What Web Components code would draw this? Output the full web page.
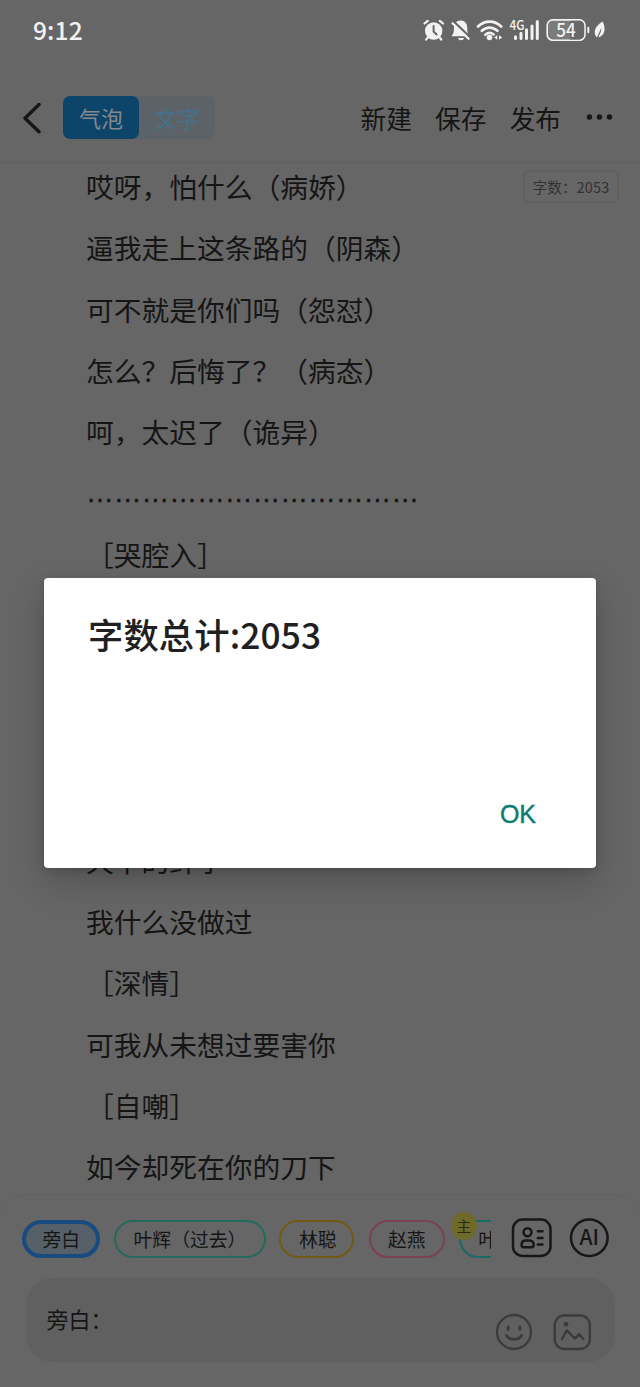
<!DOCTYPE html>
<html lang="zh-CN">
<head>
<meta charset="utf-8">
<title>字数总计</title>
<style>
html,body{margin:0;background:#666}
body{font-family:"Noto Sans CJK SC","Noto Sans",sans-serif;color:#151515;text-spacing-trim:space-all}
</style>
</head>
<body>
<script-app></script-app>
<script>
const define=(name,html)=>customElements.define(name,class extends HTMLElement{
  constructor(){super();this.attachShadow({mode:'open'}).innerHTML=html;}
});

define('status-bar',`<style>
:host{display:flex;box-sizing:border-box;height:75px;padding:0 0 0 33px;align-items:flex-start;color:#f2f2f2}
.time{font-size:24.5px;line-height:30px;margin-top:15px;font-weight:500;letter-spacing:.15px;flex:1}
svg{width:190px;height:30px;margin:15px 27px 0 0;flex:none}
text{font-family:"Noto Sans CJK SC",sans-serif;font-weight:500;fill:#f2f2f2}
</style>
<div class="time">9:12</div>
<svg viewBox="423 15 190 30" fill="#f2f2f2" stroke-linecap="round">
 <circle cx="433.7" cy="31" r="8.7"/>
 <path d="M424.500 23.500l3.200-2.600M443 23.500l-3.200-2.600M427.700 37.500l-1.500 2M439.700 37.500l1.500 2" stroke="#f2f2f2" stroke-width="2.200" fill="none"/>
 <path d="M433.600 26v5.500l3 3" stroke="#666" stroke-width="2" fill="none"/>
 <path d="M460.700 20.500c-4.500 0-6.700 3.300-6.700 7.500 0 4-.7 5.700-2.500 8.200h17.800c-1.800-2.500-2-4.500-2-8.200 0-4.200-2.100-7.500-6.600-7.500zM458 38h6c-.6 3-5.400 3-6 0z"/>
 <path d="M453.500 21.300L470.300 37.500" stroke="#666" stroke-width="2.400"/>
 <path d="M452.500 23.300L468.600 38.700" stroke="#f2f2f2" stroke-width="2.200"/>
 <g fill="none" stroke="#f2f2f2" stroke-width="2.700"><path d="M478 26.500c6.800-6.600 16.400-6.600 23.200 0M481.800 30.800c4.700-4.300 10.900-4.300 15.600 0M485.300 34.700c2.700-2.200 5.800-2.200 8.300-.2"/></g>
 <circle cx="489.500" cy="37.500" r="2.800"/>
 <path d="M494.200 37.500l3.100-2.300v4.600zM502.200 37.500l-3.100-2.300v4.600z"/>
 <text x="509.500" y="30" font-size="12.500" textLength="15" lengthAdjust="spacingAndGlyphs">4G</text>
 <path d="M515.500 36.700v1.800M521 33.300v5.200M526.500 29.800v8.700M532 26v12.500M537.300 21.500v17" stroke="#f2f2f2" stroke-width="3"/>
 <rect x="547.200" y="19.900" width="37.800" height="20.300" rx="5.500" fill="#7b7b7b" stroke="#f2f2f2" stroke-width="1.600"/>
 <path d="M570 20.800h9.500a4.600 4.600 0 0 1 4.600 4.600v9.400a4.600 4.600 0 0 1-4.600 4.600H570z" fill="#686868"/>
 <path d="M588.300 27.800v4.500" stroke="#f2f2f2" stroke-width="2"/>
 <text x="566" y="36.700" font-size="18" text-anchor="middle" textLength="19.500" lengthAdjust="spacingAndGlyphs">54</text>
 <path d="M602.700 21.600c3.200 6.700 2.500 13.600-3.900 15.900l.1-1.800c1.800-2.700 2.500-5 2.300-7.700-1.400 3.500-2.700 5.700-4.200 9.500-4.700-4.500-2-11.300 5.700-15.900z"/>
</svg>`);

define('mode-toggle',`<style>
:host{display:flex;width:152px;height:43px;border-radius:8px;background:#5c6368;font-size:22px;line-height:43px;text-align:center}
span{width:76px;color:#42728e}
.on{background:#0d456a;border-radius:7px;color:#83898d}
</style><span class="on">气泡</span><span>文字</span>`);

define('top-bar',`<style>
:host{display:flex;box-sizing:border-box;height:88px;border-bottom:1px solid #606060;padding:21px 27px 0 22px;align-items:flex-start}
.back{width:20px;height:32px;margin:6px 21px 0 0}
nav{margin-left:auto;display:flex;gap:23.200px;font-size:25.700px;line-height:43px}
.more{width:27px;height:8px;margin:17px 0 0 25px}
</style>
<svg class="back" viewBox="0 0 20 32" fill="none" stroke="#171717" stroke-width="3.400" stroke-linecap="round" stroke-linejoin="round"><path d="M17 2.500L3 16.200 17 29.700"/></svg>
<mode-toggle></mode-toggle>
<nav><span>新建</span><span>保存</span><span>发布</span></nav>
<svg class="more" viewBox="0 0 27 8" fill="#171717"><circle cx="3.500" cy="4" r="2.700"/><circle cx="13.500" cy="4" r="2.700"/><circle cx="23.500" cy="4" r="2.700"/></svg>`);

define('script-line',`<style>
:host{display:block;height:61.250px;line-height:61.250px;font-size:27.750px;white-space:nowrap}
:host([dots]){font-family:"Liberation Sans","Noto Sans CJK SC",sans-serif;-webkit-text-stroke:.4px}
</style><slot></slot>`);

define('script-text',`<style>
:host{display:block;position:relative;height:1031px;overflow:hidden}
.lines{margin:-7px 0 0 86px}
.count{position:absolute;right:21px;top:7px;box-sizing:border-box;width:96px;height:33px;border:2px solid #606060;border-radius:6px;font-size:14.500px;line-height:29px;text-align:center;color:#323232;letter-spacing:.15px;white-space:nowrap}
</style>
<div class="lines"><slot></slot></div><div class="count">字数：2053</div>`);

define('role-chip',`<style>
:host{display:block;box-sizing:border-box;flex:none;height:38px;border:2px solid var(--c);border-radius:19px;padding:0 17.400px;font-size:18.800px;line-height:34px;white-space:nowrap;position:relative}
:host([selected]){border-width:4px;padding:0 16.500px;line-height:30px;background:#566068}
</style><slot></slot>`);

define('role-bar',`<style>
:host{display:flex;height:65px;padding-left:22px}
.scroll{display:flex;width:469px;overflow:hidden;padding-top:25px}
role-chip+role-chip{margin-left:14.200px}
.last{width:76px}
.badge{position:absolute;left:-10px;top:-10px;width:26px;height:28px;border-radius:50%;background:#6e6a29;font-size:15px;line-height:27px;text-align:center;color:#2b2a16}
.i{width:42px;height:42px;margin:22px 0 0 20px;flex:none}
.i+.i{margin-left:16px}
text{font:500 21px "Noto Sans CJK SC",sans-serif;fill:#171717}
</style>
<div class="scroll">
<role-chip selected style="--c:#184b80;width:78px">旁白</role-chip>
<role-chip style="--c:#236a5d;width:152px">叶辉（过去）</role-chip>
<role-chip style="--c:#735a12;width:75px;margin-left:13.300px">林聪</role-chip>
<role-chip style="--c:#7b414f;width:76px">赵燕</role-chip>
<role-chip class="last" style="--c:#1b6a63">叶<span class="badge">主</span></role-chip>
</div>
<svg class="i" viewBox="0 0 42 42" fill="none" stroke="#171717" stroke-width="2.500" stroke-linecap="round"><rect x="2" y="2.500" width="37.500" height="36.500" rx="9.500"/><circle cx="16.500" cy="15.200" r="4"/><path d="M14.500 23.500h4.200c2.500 0 4 2 4 4.500 0 1.800-.7 2.200-2.200 2.200h-7.700c-1.500 0-2.200-.4-2.200-2.200 0-2.500 1.400-4.500 3.900-4.500zM26.800 14.300h4.700M26.800 21h4.700M26.800 27.500h4.700"/></svg>
<svg class="i" viewBox="0 0 42 42"><circle cx="20.300" cy="20.800" r="18.300" fill="none" stroke="#171717" stroke-width="2.500"/><text x="20.300" y="28" text-anchor="middle">AI</text></svg>`);

define('message-input',`<style>
:host{display:flex;box-sizing:border-box;margin:18px 25px 0 26px;height:84px;border-radius:27px;background:#606060;padding:0 24px 0 20.500px}
span{font-size:22px;line-height:81px;flex:1}
svg{width:38px;height:38px;margin-top:35px;margin-left:20px}
</style><span>旁白：</span>
<svg viewBox="0 0 38 38" fill="none" stroke="#3b3b3b" stroke-width="2.300" stroke-linecap="round"><circle cx="19" cy="19" r="17"/><path d="M13.200 14v2.500M24.800 14v2.500M11.500 22.500c3 5.200 12 5.200 15 0" stroke-width="2.800"/></svg>
<svg viewBox="0 0 38 38" fill="none" stroke="#3b3b3b" stroke-width="2.300" stroke-linecap="round" stroke-linejoin="round"><rect x="1.800" y="2.500" width="35" height="33.500" rx="9.500"/><path d="M9 26l4.800-8.700 8 8.200 4.500-4.300 3.900 4.800" stroke-width="2.500"/><circle cx="13" cy="11.200" r="1.700" fill="#3b3b3b" stroke-width="1.500"/></svg>`);

define('bottom-panel',`<style>
:host{display:block;box-sizing:border-box;height:193px;border-radius:26px 26px 0 0;border-top:1px solid #626262;background:#666}
</style><role-bar></role-bar><message-input></message-input>`);

define('alert-dialog',`<style>
:host{position:absolute;left:44px;top:578px;width:552px;height:290px;box-sizing:border-box;background:#fff;border-radius:4px;padding:30px 60px 0 44px;display:flex;flex-direction:column;box-shadow:0 15px 36px rgba(0,0,0,.19),0 3px 8px rgba(0,0,0,.13)}
h1{margin:0;font-size:35.300px;line-height:52px;font-weight:500;color:#202020;letter-spacing:.12px}
button{all:unset;margin:auto 0 36px auto;font:25px/36px "Liberation Sans",sans-serif;color:#087c70;-webkit-text-stroke:.4px #087c70}
</style><h1><slot></slot></h1><button>OK</button>`);

define('script-app',`<style>
:host{display:block;position:relative;width:640px;height:1387px;overflow:hidden;background:#666}
</style>
<status-bar></status-bar><top-bar></top-bar>
<script-text>
<script-line>哎呀，怕什么（病娇）</script-line>
<script-line>逼我走上这条路的（阴森）</script-line>
<script-line>可不就是你们吗（怨怼）</script-line>
<script-line>怎么？后悔了？（病态）</script-line>
<script-line>呵，太迟了（诡异）</script-line>
<script-line dots>…………………………………</script-line>
<script-line>［哭腔入］</script-line>
<script-line></script-line><script-line></script-line><script-line></script-line><script-line></script-line>
<script-line>天下的纤争</script-line>
<script-line>我什么没做过</script-line>
<script-line>［深情］</script-line>
<script-line>可我从未想过要害你</script-line>
<script-line>［自嘲］</script-line>
<script-line>如今却死在你的刀下</script-line>
</script-text>
<bottom-panel></bottom-panel>
<alert-dialog>字数总计:2053</alert-dialog>`);

document.querySelectorAll('script-app').forEach(app=>{
  app.shadowRoot.querySelector('[dots]').textContent='…'.repeat(12);
});
</script>
</body>
</html>
